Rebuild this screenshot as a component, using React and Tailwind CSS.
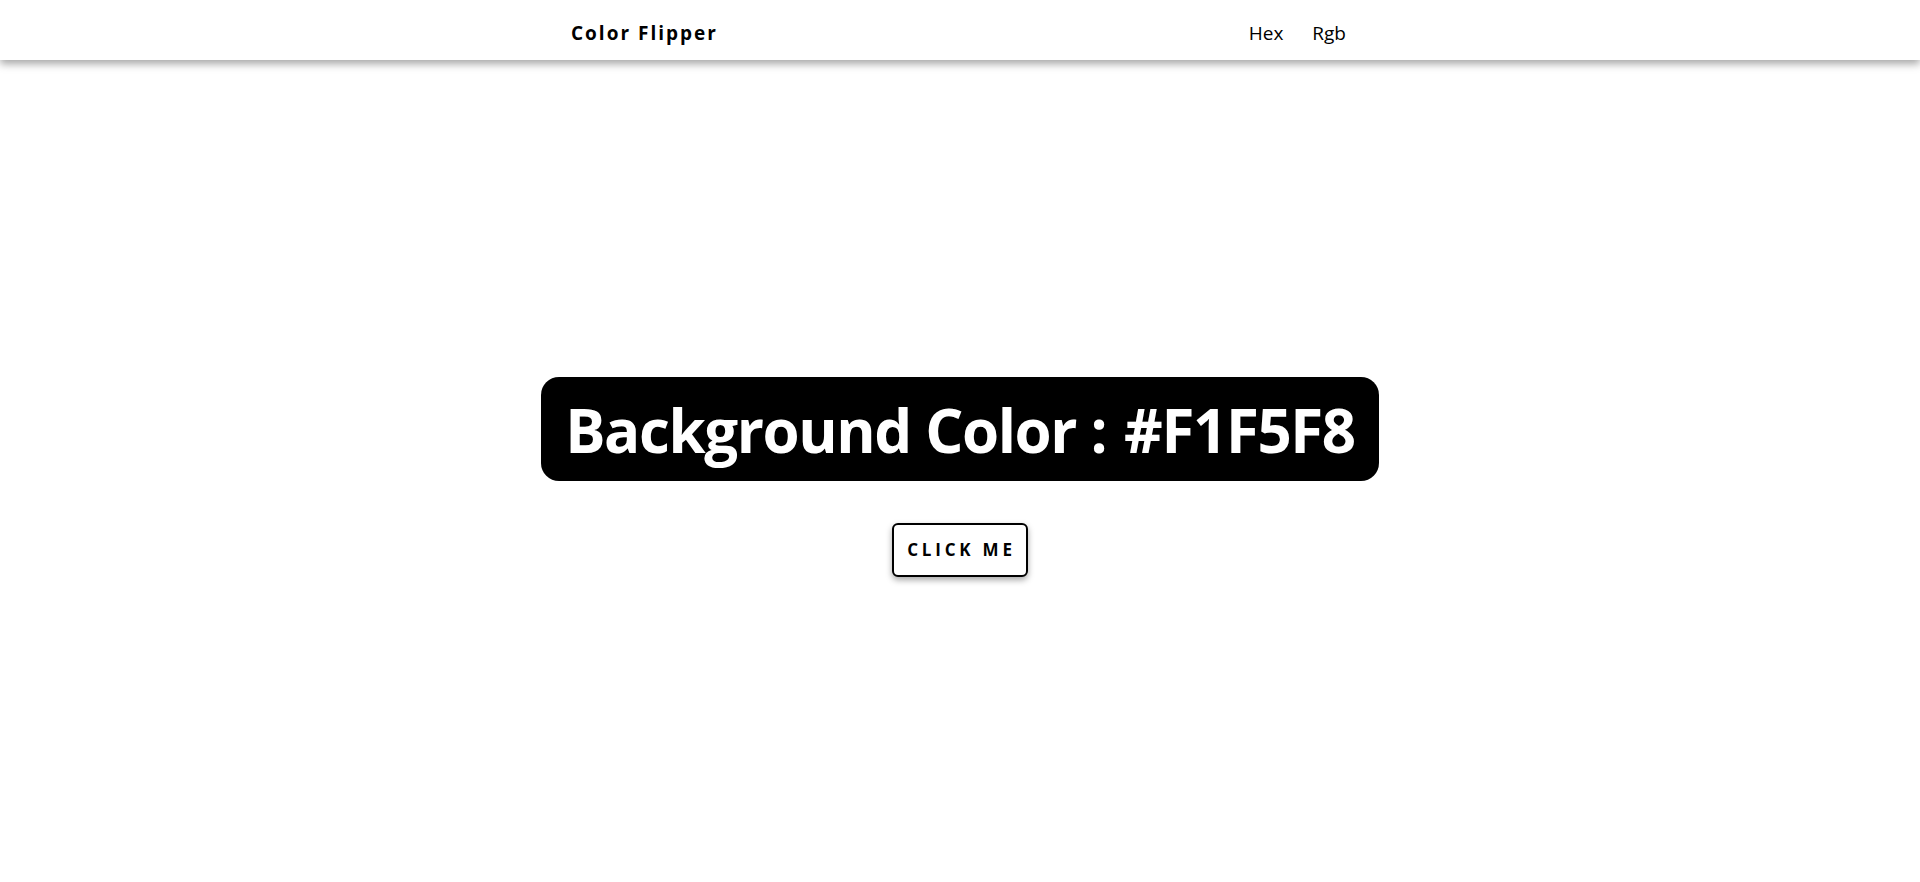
import React from 'react';

const font = { fontFamily: '"Open Sans", "Noto Sans", sans-serif' };

export default function App() {
  return (
    <div className="min-h-screen bg-white text-black" style={font}>
      <nav className="h-[60px] bg-white shadow-[0_4px_8px_rgba(0,0,0,0.35)] relative z-10">
        <div className="w-[778px] mx-auto h-full flex items-center justify-between pt-[6px]">
          <h4 className="text-[19px] font-bold tracking-[2px] leading-none">Color Flipper</h4>
          <ul className="flex items-center gap-[29px] text-[19px] leading-none mr-[3px]">
            <li><a href="#">Hex</a></li>
            <li><a href="#">Rgb</a></li>
          </ul>
        </div>
      </nav>
      <main className="h-[822px] flex flex-col items-center justify-center pt-[12px]">
        <h2 className="bg-black text-white rounded-[18px] h-[104px] px-[24px] flex items-center text-[60px] font-bold tracking-[-1.4px] leading-none pt-[2px]">
          Background Color : <span className="ml-[18px]">#F1F5F8</span>
        </h2>
        <button className="mt-[42px] w-[136px] h-[54px] border-2 border-black rounded-[6px] bg-white shadow-[0_3px_6px_rgba(0,0,0,0.35)] text-[17px] font-bold tracking-[3.8px] uppercase pl-[3px]">
          Click Me
        </button>
      </main>
    </div>
  );
}
